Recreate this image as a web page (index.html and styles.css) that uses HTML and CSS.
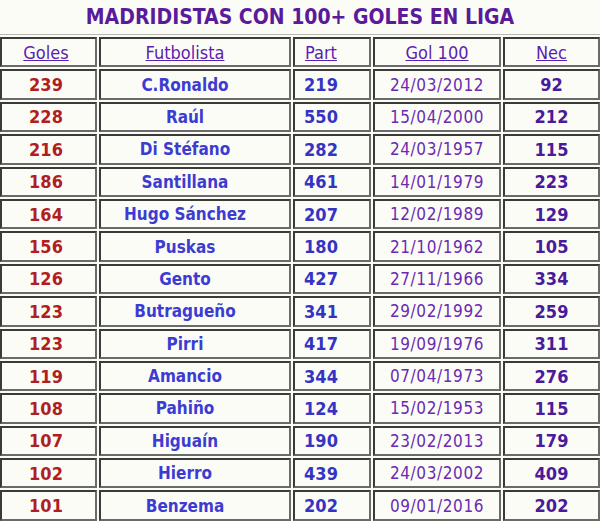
FILE: index.html
```html
<!DOCTYPE html>
<html lang="es">
<head>
<meta charset="utf-8">
<link rel="stylesheet" href="styles.css">
</head>
<body>
<h1 class="title">MADRIDISTAS CON 100+ GOLES EN LIGA</h1>
<table class="tabla">
<colgroup><col class="c1"><col class="c2"><col class="c3"><col class="c4"><col class="c5"></colgroup>
<thead>
<tr><th class="k1"><a href="#">Goles</a></th><th class="k2"><a href="#">Futbolista</a></th><th class="k3"><a href="#">Part</a></th><th><a href="#">Gol 100</a></th><th><a href="#">Nec</a></th></tr>
</thead>
<tbody>
<tr><td class="g">239</td><td class="n">C.Ronaldo</td><td class="p">219</td><td class="d">24/03/2012</td><td class="x">92</td></tr>
<tr><td class="g">228</td><td class="n">Raúl</td><td class="p">550</td><td class="d">15/04/2000</td><td class="x">212</td></tr>
<tr><td class="g">216</td><td class="n">Di Stéfano</td><td class="p">282</td><td class="d">24/03/1957</td><td class="x">115</td></tr>
<tr><td class="g">186</td><td class="n">Santillana</td><td class="p">461</td><td class="d">14/01/1979</td><td class="x">223</td></tr>
<tr><td class="g">164</td><td class="n">Hugo Sánchez</td><td class="p">207</td><td class="d">12/02/1989</td><td class="x">129</td></tr>
<tr><td class="g">156</td><td class="n">Puskas</td><td class="p">180</td><td class="d">21/10/1962</td><td class="x">105</td></tr>
<tr><td class="g">126</td><td class="n">Gento</td><td class="p">427</td><td class="d">27/11/1966</td><td class="x">334</td></tr>
<tr><td class="g">123</td><td class="n">Butragueño</td><td class="p">341</td><td class="d">29/02/1992</td><td class="x">259</td></tr>
<tr><td class="g">123</td><td class="n">Pirri</td><td class="p">417</td><td class="d">19/09/1976</td><td class="x">311</td></tr>
<tr><td class="g">119</td><td class="n">Amancio</td><td class="p">344</td><td class="d">07/04/1973</td><td class="x">276</td></tr>
<tr><td class="g">108</td><td class="n">Pahiño</td><td class="p">124</td><td class="d">15/02/1953</td><td class="x">115</td></tr>
<tr><td class="g">107</td><td class="n">Higuaín</td><td class="p">190</td><td class="d">23/02/2013</td><td class="x">179</td></tr>
<tr><td class="g">102</td><td class="n">Hierro</td><td class="p">439</td><td class="d">24/03/2002</td><td class="x">409</td></tr>
<tr><td class="g">101</td><td class="n">Benzema</td><td class="p">202</td><td class="d">09/01/2016</td><td class="x">202</td></tr>
</tbody>
</table>
</body>
</html>
```
FILE: styles.css
```css
html, body {
  margin: 0;
  padding: 0;
  background: #fcfcf6;
}
body {
  font-family: "DejaVu Sans Condensed", "DejaVu Sans", sans-serif;
  overflow: hidden;
}
.title {
  margin: 0;
  height: 34px;
  line-height: 34px;
  text-align: center;
  font-size: 21px;
  font-weight: bold;
  color: #5a1a9c;
}
.tabla {
  width: 604px;
  border-collapse: separate;
  border-spacing: 2px;
  border-top: 1px solid #b8b8b0;
  margin-left: -2px;
  table-layout: fixed;
}
.c1 { width: 97px; }
.c2 { width: 192px; }
.c3 { width: 78px; }
.c4 { width: 128px; }
.c5 { width: 97px; }
.tabla th, .tabla td {
  border: 2px solid;
  border-color: #3a3a3a #6a6a6a #6a6a6a #3a3a3a;
  background: #fcfcf6;
  text-align: center;
  padding: 0;
  height: 26.4px;
  font-size: 17px;
}
.tabla th {
  font-weight: normal;
  font-size: 18px;
}
.tabla th a {
  color: #5a1eb0;
  text-decoration: underline;
}
.tabla .k1, .tabla .g { padding-right: 5px; }
.tabla .k2, .tabla .n { padding-right: 20px; }
.tabla .k3, .tabla .p { padding-right: 22px; }
.tabla td.g { color: #b01e22; font-weight: bold; font-size: 18px; }
.tabla td.n { color: #3c3cd2; font-weight: bold; font-size: 17px; }
.tabla td.p { color: #3434c4; font-weight: bold; font-size: 18px; }
.tabla td.d { color: #6a2ab4; font-size: 17px; letter-spacing: 0.6px; }
.tabla td.x { color: #4a1a9a; font-weight: bold; font-size: 18px; }
```
